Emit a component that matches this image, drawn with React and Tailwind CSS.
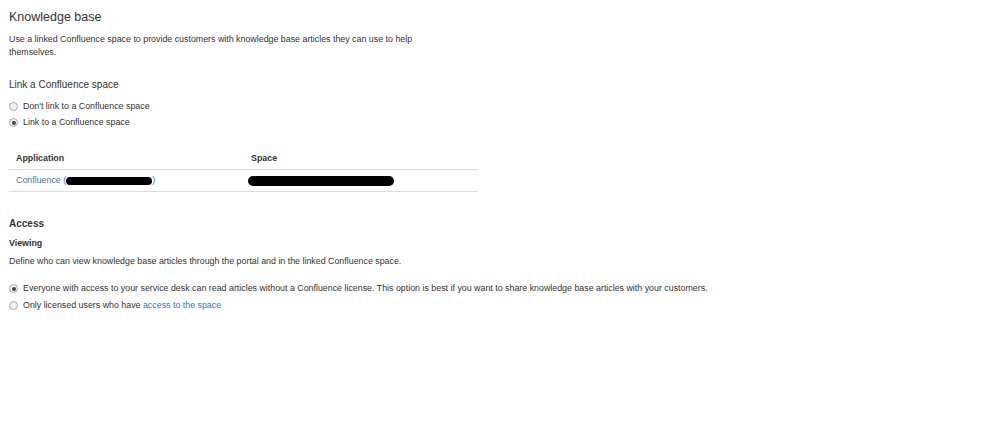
import React from 'react';

const Radio = ({ checked }) => (
    <span className="mr-[5px] flex h-[9px] w-[9px] shrink-0 items-center justify-center rounded-full border border-[#a9a9a9] bg-[#f0f0f0]">
        {checked && <span className="h-[4px] w-[4px] rounded-full bg-[#444]"></span>}
    </span>
);

const Redacted = ({ className }) => (
    <span className={`inline-block rounded-full bg-black align-middle ${className}`}></span>
);

const App = () => {
    return (
        <div className="h-[433px] w-[998px] bg-white pl-[9px] pt-[9px] text-[8.85px] leading-[13px] text-[#333] [font-family:Arial,'Liberation_Sans',sans-serif]">
            <h1 className="text-[12.5px] leading-[16px] text-[#333]">Knowledge base</h1>

            <p className="mt-[8px] w-[420px]">
                Use a linked Confluence space to provide customers with knowledge base articles they can use to help themselves.
            </p>

            <h2 className="mt-[19px] text-[10px] leading-[13px]">Link a Confluence space</h2>

            <div className="mt-[9px] flex flex-col gap-[3px]">
                <label className="flex items-center">
                    <Radio />
                    Don't link to a Confluence space
                </label>
                <label className="flex items-center">
                    <Radio checked />
                    Link to a Confluence space
                </label>
            </div>

            {/* linked application table */}
            <table className="mt-[23px] w-[469px] border-collapse">
                <thead>
                    <tr className="border-b border-[#ddd] text-left">
                        <th className="w-[235px] px-[7px] pb-[4px] font-bold text-[#333]">Application</th>
                        <th className="px-[7px] pb-[4px] font-bold text-[#333]">Space</th>
                    </tr>
                </thead>
                <tbody>
                    <tr className="border-b border-[#ddd]">
                        <td className="px-[7px] py-[4px] text-[#3b73af]">
                            Confluence (<Redacted className="h-[8px] w-[86px]" />)
                        </td>
                        <td className="px-[4px] py-[4px]">
                            <Redacted className="h-[10px] w-[146px]" />
                        </td>
                    </tr>
                </tbody>
            </table>

            <h2 className="mt-[25px] text-[10px] font-bold leading-[13px]">Access</h2>
            <h3 className="mt-[7px] font-bold">Viewing</h3>
            <p className="mt-[5px]">
                Define who can view knowledge base articles through the portal and in the linked Confluence space.
            </p>

            <div className="mt-[14px] flex flex-col gap-[4px]">
                <label className="flex items-center">
                    <Radio checked />
                    Everyone with access to your service desk can read articles without a Confluence license. This option is best if you want to share knowledge base articles with your customers.
                </label>
                <label className="flex items-center">
                    <Radio />
                    Only licensed users who have&nbsp;<span className="text-[#3b73af]">access to the space</span>
                </label>
            </div>
        </div>
    );
};

export default App;
